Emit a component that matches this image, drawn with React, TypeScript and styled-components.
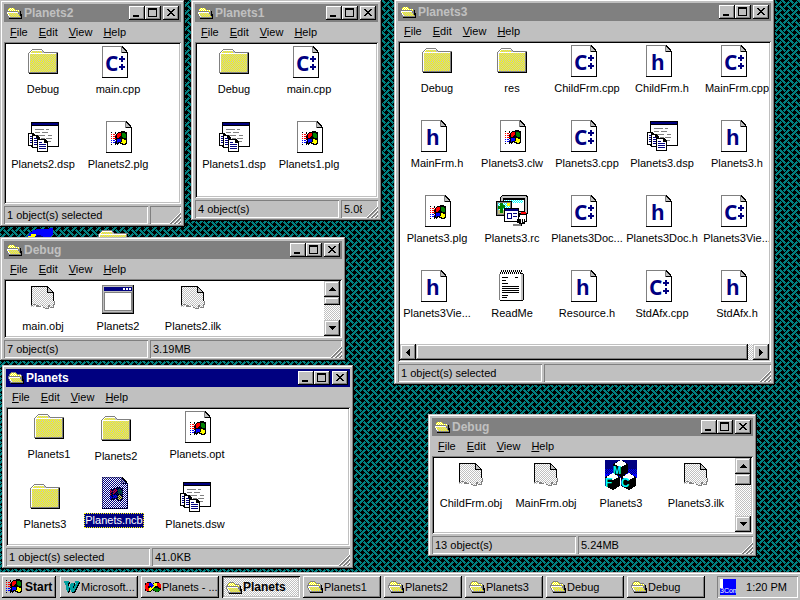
import React from "react";
import styled, { createGlobalStyle, css } from "styled-components";

const face = "#c0c0c0";
const shade = "#808080";
const navy = "#000080";

/* ---------- pixel drawings ---------- */

const palette: Record<string, string> = {
  K: "#000000", W: "#ffffff", S: "#808080", L: "#c0c0c0", R: "#ff0000", G: "#008000",
  B: "#0000ff", Y: "#ffff00",
};
const dithers: Record<string, [string, string]> = {
  y: ["Y", "L"],
};

function tracePixels(rows: string[]) {
  const out: Record<string, string> = {};
  rows.forEach((row, y) => {
    let x = 0;
    const at = (i: number) => {
      const ch = row[i];
      return dithers[ch] ? dithers[ch][(i + y) % 2] : ch;
    };
    while (x < row.length) {
      const ch = at(x);
      let end = x + 1;
      while (end < row.length && at(end) === ch) end++;
      if (palette[ch]) out[ch] = (out[ch] || "") + `M${x} ${y}h${end - x}v1h${x - end}z`;
      x = end;
    }
  });
  return Object.entries(out);
}

const Pixels = ({ rows }: { rows: string[] }) => (
  <>{tracePixels(rows).map(([ch, d]) => <path key={ch} d={d} fill={palette[ch]} />)}</>
);

const flagRows = [
  "..........KKKK..",
  "K...K..KKKKKKKKK",
  "....K.KRRRKGGGKK",
  "R.RR.KRRRRKGGGGK",
  "....RKRRRRKGGGGK",
  "R.RRKKRRRKKGGGGK",
  "....KKRRKKKKGGGK",
  "R.RRRKKKKKKKKKKK",
  "....KKBBBBKYYKKK",
  "B.BB.KBBBBKYYYYK",
  "....BKBBBBKYYYYK",
  "B.BBKKBKKKYYYYYK",
  "....KKKK.KKKYYKK",
  "K...K.K....KKKK.",
];

const openFolderRows = [
  "................",
  "................",
  "...SSSSS........",
  "..SYWYWYS.......",
  ".SYWYWYWYSSSS...",
  ".SWYWYWYWYWYWS..",
  "SSSSSSSSSSSSYSK.",
  "SWWWWWWWWWWWSSK.",
  "SWyyyyyyyyyySSK.",
  ".SWyyyyyyyyyySKK",
  ".SWyyyyyyyyyySKK",
  "..SWyyyyyyyyyySK",
  "..SSSSSSSSSSSSSK",
  "...KKKKKKKKKKKKK",
  "................",
  "................",
];

const folderRows = (() => {
  const rows = ["", "", ""];
  rows.push(".....SSSSSSSSSS");
  rows.push("....SWWWWWWWWWWS");
  rows.push("...SWyyyyyyyyyyLS");
  rows.push("..SWyyyyyyyyyyyyLSSSSSSSSSSSSSS");
  rows.push(".SWWWWWWWWWWWWWWWWWWWWWWWWWWWSK");
  for (let i = 0; i < 18; i++) rows.push(".SW" + "y".repeat(26) + "SK");
  rows.push(".S" + "S".repeat(27) + "SK");
  rows.push("..KKKKKKKKKKKKKKKKKKKKKKKKKKKKK");
  return rows;
})();

type IconKind = "folder" | "cpp" | "h" | "win" | "ncb" | "project" | "rc" | "notes" | "obj" | "exe" | "mfc";

const Page = () => (
  <>
    <path d="M0 0H20L26 7V32H0Z" fill="#fff" />
    <path d="M0 0h20v1H1v30H0z" fill={shade} />
    <path d="M25 7h1v25H0v-1h25z" />
    <path d="M19 0h1v6h5v1h-6z" fill={shade} />
    <path d="M20 0h1v1h1v1h1v1h1v1h1v2h1v2h-1v-1h-5z" />
    <path d="M20 2h1v1h1v1h1v1h1v1h-4z" fill={face} />
  </>
);

const SheetStack = () => (
  <>
    {[[1, 12, 8], [5, 14, 8], [10, 18, 11]].map(([x, y, w]) => (
      <g key={x}>
        <path d={`M${x} ${y}h${w - 3}l3 3v10h-${w}z`} fill="#000" />
        <path d={`M${x + 1} ${y + 1}h${w - 5}v3h3v8h-${w - 2}z`} fill="#fff" />
        <path d={`M${x + 2} ${y + 3}h3v1h-3zM${x + 2} ${y + 5}h${w - 4}v1h-${w - 4}zM${x + 2} ${y + 7}h${w - 4}v1h-${w - 4}zM${x + 2} ${y + 9}h${w - 4}v1h-${w - 4}z`} fill={navy} />
      </g>
    ))}
  </>
);

const drawings: Record<IconKind, React.ReactNode> = {
  folder: <Pixels rows={folderRows} />,
  cpp: (
    <>
      <Page />
      <text x="3" y="25" fill={navy} fontFamily="'Open Sans','Noto Sans',sans-serif" fontWeight="700" fontSize="21">C</text>
      <path d="M19 10h2v2h2v2h-2v2h-2v-2h-2v-2h2zM19 18h2v2h2v2h-2v2h-2v-2h-2v-2h2z" fill={navy} />
    </>
  ),
  h: (
    <>
      <Page />
      <text x="5" y="25" fill={navy} fontFamily="'Liberation Sans',sans-serif" fontWeight="700" fontSize="22">h</text>
    </>
  ),
  win: <g transform="translate(4 0)"><Page /><g transform="translate(5 10)"><Pixels rows={flagRows} /></g></g>,
  ncb: (
    <g transform="translate(4 0)">
      <Page />
      <g transform="translate(5 10)"><Pixels rows={flagRows} /></g>
      <path d="M0 0H20L26 7V32H0Z" fill="url(#selected-veil)" />
    </g>
  ),
  project: (
    <>
      <path d="M4 1h28v25H4z" />
      <path d="M5 5h26v20H5z" fill="#fff" />
      <path d="M5 2h26v2H5z" fill={navy} />
      <path d="M8 8h9v1H8zM19 8h3v1h-3zM8 11h5v1H8zM15 11h6v1h-6zM10 14h8v1h-8zM21 14h4v1h-4zM14 17h4v1h-4zM19 17h6v1h-6zM20 20h4v1h-4z" fill={shade} />
      <SheetStack />
    </>
  ),
  rc: (
    <>
      <path d="M6 0h24l2 2v16l-2 2H6l-2-2V2z" />
      <path d="M6 1h24v1h1v16H5V2h1z" fill={face} />
      <path d="M7 3h22v14H7z" />
      <path d="M8 5h20v11H8z" fill="#fff" />
      <path d="M9 5h18v3H9z" fill="url(#cyan-dither)" />
      <path d="M0 6h16v15H0z" fill="#000" />
      <path d="M1 7h14v13H1z" fill={shade} />
      <path d="M2 8h12v7H2z" fill="url(#cyan-dither)" />
      <path d="M2 15h12v4H2z" fill="#c0c080" />
      <path d="M11 8h3v3h-3z" fill="#ff0" />
      <path d="M4 8h3v10H4zM2 11h2v3H2zM7 10h2v3H7z" fill="#008000" />
      <path d="M8 13h15v14H8z" />
      <path d="M9 16h13v10H9z" fill="#fff" />
      <path d="M9 14h13v2H9z" fill={navy} />
      <path d="M11 18h5v6h-5z" fill={navy} />
      <path d="M12 19h3v4h-3z" fill="#fff" />
      <path d="M17 18h4v1h-4zM17 21h4v1h-4z" fill={navy} />
      <path d="M25 17h5v2h-5z" fill="#f00" />
      <path d="M23 19h8v8h-2v2h-3v2h-3v-3h-2v-4h2z" fill="#000" />
      <path d="M24 20h6v6h-1v-2h-1v3h-1v-3h-1v4h-1v-4h-2v-2h1z" fill="#fff" />
      <path d="M17 29h8v2h-8z" fill={shade} />
    </>
  ),
  notes: (
    <>
      <path d="M4 3h23v1h1v26h-1v1H4v-1H3V4h1z" />
      <path d="M4 3h21v27H4z" fill="#fff" />
      <path d="M3 4h1v26H3z" fill={shade} />
      <path d="M25 4h2v26h-2z" fill={face} />
      <path d="M4 30h23v1H4z" />
      {Array.from({ length: 11 }, (_, i) => (
        <path key={i} d={`M${4 + i * 2} 2h1v2h-1zM${5 + i * 2} 0h1v2h-1z`} />
      ))}
      <path d="M6 7h6v1H6zM19 7h3v1h-3zM6 10h4v1H6zM6 13h6v1H6zM6 16h17v1H6zM6 18h17v1H6zM6 20h17v1H6zM6 22h17v1H6zM6 25h6v1H6zM6 27h5v1H6z" />
    </>
  ),
  obj: (
    <>
      <path d="M4 3h17l6 6v12l-3 3h-3l-1 1h-4l-2-2H9l-3 1H4z" fill="url(#gray-dither)" />
      <path d="M4 22V3h17l6 7v8h-1v-8h-6V4H5v18z" />
      <path d="M21 5l4 4h-4z" fill={face} />
      <path d="M4 22h2v-1h3v1h3v1h3v-1h1v2h2v1h3v-3h2v2h3v-3h1v-3h1v4h-1v3h-4v-1h-1v2h-4v-1h-2v-2h-2v1H9v-2H6v1H4z" fill={shade} />
    </>
  ),
  exe: (
    <>
      <path d="M0 2h32v29H0z" />
      <path d="M0 2h31v28H0z" fill={shade} />
      <path d="M1 3h29v26H1z" fill={face} />
      <path d="M2 4h28v4H2z" fill={navy} />
      <path d="M21 5h2v2h-2zM24 5h2v2h-2zM27 5h2v2h-2z" fill="#fff" />
      <path d="M2 9h28v19H2z" fill={shade} />
      <path d="M3 10h26v17H3z" fill="#fff" />
    </>
  ),
  mfc: (
    <>
      <path d="M0 0h32v18H0z" fill="#0000ff" />
      <path d="M0 0h32v9H0z" fill={navy} />
      <path d="M0 9h32v5H0z" fill="url(#selected-veil)" />
      {[[8, 0], [0, 13], [16, 13]].map(([x, y]) => (
        <g key={x} transform={`translate(${x} ${y})`}>
          <path d="M0 4L8 0L15 4V13L8 17L0 13Z" />
          <path d="M1 4L8 0L14 4L8 7Z" fill="#fff" />
        </g>
      ))}
      <g fill="#0ff" fontFamily="'Liberation Sans',sans-serif" fontWeight="700">
        <text x="8" y="14" fontSize="10">M</text>
        <text x="0" y="27" fontSize="12">F</text>
        <text x="16" y="27" fontSize="12">C</text>
      </g>
    </>
  ),
};

const FileIcon = ({ kind }: { kind: IconKind }) => (
  <svg width="32" height="32" viewBox="0 0 32 32" shapeRendering="crispEdges" overflow="visible" aria-hidden="true">
    {drawings[kind]}
  </svg>
);

const SmallIcon = ({ children }: { children: React.ReactNode }) => (
  <svg width="16" height="16" viewBox="0 0 16 16" shapeRendering="crispEdges" aria-hidden="true">{children}</svg>
);

const FolderGlyph = () => <SmallIcon><Pixels rows={openFolderRows} /></SmallIcon>;

const SharedPatterns = () => (
  <PatternDefs width="0" height="0" aria-hidden="true">
    <defs>
      {[["gray-dither", "#fff", face], ["cyan-dither", "#0ff", "#fff"], ["selected-veil", navy, "none"]].map(([id, a, b]) => (
        <pattern key={id} id={id} width="2" height="2" patternUnits="userSpaceOnUse">
          <path d="M0 0h1v1H0zM1 1h1v1H1z" fill={a} shapeRendering="crispEdges" />
          <path d="M1 0h1v1H1zM0 1h1v1H0z" fill={b} shapeRendering="crispEdges" />
        </pattern>
      ))}
    </defs>
  </PatternDefs>
);

/* ---------- desktop ---------- */

const thatch = [248, 116, 34, 71, 143, 23, 34, 113];
const thatchPath = thatch
  .map((bits, y) => Array.from({ length: 8 }, (_, x) => ((bits >> (7 - x)) & 1 ? `M${x} ${y}h1v1h-1z` : "")).join(""))
  .join("");
const thatchTile = `url("data:image/svg+xml,${encodeURIComponent(
  `<svg xmlns="http://www.w3.org/2000/svg" width="8" height="8" shape-rendering="crispEdges"><path d="${thatchPath}"/></svg>`
)}")`;

const checker = `repeating-conic-gradient(${face} 0 25%, #fff 0 50%) 0 0 / 2px 2px`;

const Global = createGlobalStyle`
  *, *::before, *::after { box-sizing: border-box; }
  body { margin: 0; overflow: hidden; }
  body, button { font: 11px/15px "Liberation Sans", Arial, sans-serif; color: #000; }
  button { border: 0; padding: 0; margin: 0; background: none; }
  svg { display: block; flex: none; }
`;

const PatternDefs = styled.svg`position: absolute;`;

const Screen = styled.div`
  display: flex;
  flex-direction: column;
  height: 100vh;
`;

const Desktop = styled.main`
  position: relative;
  flex: 1;
  overflow: hidden;
  background: #008080 ${thatchTile} 0 0 / 8px 8px;
`;

const Shortcut = styled.div<{ $x: number; $y: number }>`
  position: absolute;
  left: ${(p) => p.$x}px;
  top: ${(p) => p.$y}px;
`;

const raised = css`
  background: ${face};
  box-shadow: inset -1px -1px #000, inset 1px 1px #fff, inset -2px -2px ${shade};
`;

const raisedSoft = css`
  background: ${face};
  box-shadow: inset -1px -1px #000, inset 1px 1px ${face}, inset -2px -2px ${shade}, inset 2px 2px #fff;
`;

/* ---------- window parts ---------- */

const Frame = styled.section<{ $x: number; $y: number; $w: number; $h: number }>`
  ${raisedSoft}
  position: absolute;
  left: ${(p) => p.$x}px;
  top: ${(p) => p.$y}px;
  width: ${(p) => p.$w}px;
  height: ${(p) => p.$h}px;
  display: flex;
  flex-direction: column;
  padding: 4px 4px 3px;
`;

const TitleBar = styled.header<{ $active?: boolean }>`
  display: flex;
  align-items: center;
  height: 18px;
  padding: 0 2px;
  flex: none;
  background: ${(p) => (p.$active ? navy : shade)};
  color: ${(p) => (p.$active ? "#fff" : face)};
`;

const Title = styled.h2`
  flex: 1;
  margin: 0 0 0 2px;
  font-size: 12px;
  line-height: 18px;
  font-weight: 700;
`;

const CaptionButton = styled.button<{ $apart?: boolean }>`
  ${raised}
  width: 16px;
  height: 14px;
  margin-left: ${(p) => (p.$apart ? 2 : 0)}px;
`;

const MenuBar = styled.nav`
  display: flex;
  height: 20px;
  padding-left: 1px;
  flex: none;
`;

const MenuItem = styled.button`
  padding: 0 6px 0 5px;
  line-height: 20px;
`;

const Client = styled.div<{ $column?: boolean }>`
  flex: 1;
  min-height: 0;
  display: flex;
  flex-direction: ${(p) => (p.$column ? "column" : "row")};
  padding: 2px;
  background: #fff;
  box-shadow: inset 1px 1px ${shade}, inset -1px -1px #fff, inset 2px 2px #000, inset -2px -2px ${face};
`;

const IconGrid = styled.div<{ $columns: number }>`
  flex: 1;
  min-width: 0;
  min-height: 0;
  overflow: hidden;
  display: grid;
  grid-template-columns: repeat(${(p) => p.$columns}, 75px);
  grid-auto-rows: 75px;
  align-content: start;
  padding-top: 2px;
`;

const IconCanvas = styled.div`
  position: relative;
  flex: 1;
`;

const Item = styled.button`
  width: 74px;
  display: flex;
  flex-direction: column;
  align-items: center;
  align-self: start;
  gap: 4px;
`;

const PlacedItem = styled(Item)<{ $x: number; $y: number }>`
  position: absolute;
  left: ${(p) => p.$x}px;
  top: ${(p) => p.$y}px;
`;

const ItemLabel = styled.span<{ $selected?: boolean }>`
  height: 15px;
  white-space: nowrap;
  ${(p) => p.$selected && css`
    padding: 0 1px;
    background: ${navy};
    color: #fff;
    outline: 1px dotted #ffff00;
    outline-offset: -1px;
  `}
`;

const StatusBar = styled.footer`
  position: relative;
  display: flex;
  gap: 2px;
  height: 18px;
  margin-top: 2px;
  flex: none;
`;

const StatusCell = styled.div<{ $fill?: boolean }>`
  flex: ${(p) => (p.$fill ? "1 1 0" : "0 0 144px")};
  min-width: 0;
  padding: 0 ${(p) => (p.$fill ? 16 : 3)}px 0 3px;
  line-height: 18px;
  box-shadow: inset 1px 1px ${shade}, inset -1px -1px #fff;
`;

const StatusText = styled.span`
  display: block;
  overflow: hidden;
  white-space: nowrap;
`;

const Grip = styled.svg`
  position: absolute;
  right: 0;
  bottom: 0;
`;

const ScrollTrack = styled.div<{ $across?: boolean }>`
  display: flex;
  flex-direction: ${(p) => (p.$across ? "row" : "column")};
  flex: 0 0 16px;
  background: ${checker};
`;

const ScrollButton = styled.button`
  ${raisedSoft}
  display: grid;
  place-items: center;
  width: 16px;
  height: 16px;
  flex: none;
`;

const Thumb = styled.div<{ $size?: number }>`
  ${raisedSoft}
  flex: ${(p) => (p.$size ? `0 0 ${p.$size}px` : "1")};
`;

const TrackSpace = styled.div<{ $size?: number }>`
  flex: ${(p) => (p.$size ? `0 0 ${p.$size}px` : "1")};
`;

const arrows = {
  up: "M3 0h1v1h1v1h1v1h1v1H0V3h1V2h1V1h1z",
  down: "M0 0h7v1H6v1H5v1H4v1H3V3H2V2H1V1H0z",
  left: "M3 0h1v7H3V6H2V5H1V4H0V3h1V2h1V1h1z",
  right: "M0 0h1v1h1v1h1v1h1v1H3v1H2v1H1v1H0z",
};

const Arrow = ({ to }: { to: keyof typeof arrows }) => {
  const wide = to === "up" || to === "down";
  return (
    <ScrollButton aria-label={`Scroll ${to}`}>
      <svg width={wide ? 7 : 4} height={wide ? 4 : 7} shapeRendering="crispEdges" aria-hidden="true"><path d={arrows[to]} /></svg>
    </ScrollButton>
  );
};

const captionShapes = {
  Minimize: "M4 9h6v2H4z",
  Maximize: "M3 2h9v9H3zM4 4v6h7V4z",
  Close: "M4 3h2v1h1v1h2V4h1V3h2v1h-1v1h-1v1H9v1h1v1h1v1h1v1h-2V9H9V8H7v1H6v1H4V9h1V8h1V7h1V6H6V5H5V4H4z",
};

type Entry = { name: string; kind: IconKind; x?: number; y?: number; selected?: boolean };
type Win = {
  title: string; x: number; y: number; w: number; h: number; active?: boolean; columns?: number;
  files: Entry[]; status: string; size?: string; vthumb?: number; hscroll?: boolean;
};

const ExplorerWindow = ({ win }: { win: Win }) => (
  <Frame $x={win.x} $y={win.y} $w={win.w} $h={win.h} aria-label={win.title}>
    <TitleBar $active={win.active}>
      <FolderGlyph />
      <Title>{win.title}</Title>
      {Object.entries(captionShapes).map(([name, d]) => (
        <CaptionButton key={name} aria-label={name} $apart={name === "Close"}>
          <svg width="16" height="14" shapeRendering="crispEdges" aria-hidden="true"><path d={d} fillRule="evenodd" /></svg>
        </CaptionButton>
      ))}
    </TitleBar>
    <MenuBar>
      {["File", "Edit", "View", "Help"].map((m) => (
        <MenuItem key={m}><u>{m[0]}</u>{m.slice(1)}</MenuItem>
      ))}
    </MenuBar>
    <Client $column={win.hscroll}>
      {win.columns ? (
        <IconGrid $columns={win.columns}>
          {win.files.map((f, i) => (
            <Item key={i}>
              <FileIcon kind={f.kind} />
              <ItemLabel>{f.name}</ItemLabel>
            </Item>
          ))}
        </IconGrid>
      ) : (
        <IconCanvas>
          {win.files.map((f, i) => (
            <PlacedItem key={i} $x={f.x ?? 0} $y={f.y ?? 0}>
              <FileIcon kind={f.kind} />
              <ItemLabel $selected={f.selected}>{f.name}</ItemLabel>
            </PlacedItem>
          ))}
        </IconCanvas>
      )}
      {win.vthumb && (
        <ScrollTrack>
          <Arrow to="up" />
          <Thumb $size={win.vthumb} />
          <TrackSpace />
          <Arrow to="down" />
        </ScrollTrack>
      )}
      {win.hscroll && (
        <ScrollTrack $across>
          <Arrow to="left" />
          <Thumb />
          <TrackSpace $size={5} />
          <Arrow to="right" />
        </ScrollTrack>
      )}
    </Client>
    <StatusBar>
      <StatusCell><StatusText>{win.status}</StatusText></StatusCell>
      <StatusCell $fill><StatusText>{win.size}</StatusText></StatusCell>
      <Grip width="12" height="12" aria-hidden="true">
        <path d="M0 12L12 0M4 12L12 4M8 12L12 8" stroke="#fff" />
        <path d="M1 12L12 1M2 12L12 2M5 12L12 5M6 12L12 6M9 12L12 9M10 12L12 10" stroke={shade} />
      </Grip>
    </StatusBar>
  </Frame>
);

const windows: Win[] = [
  {
    title: "Planets2", x: 0, y: 0, w: 185, h: 227, columns: 2, status: "1 object(s) selected",
    files: [
      { name: "Debug", kind: "folder" }, { name: "main.cpp", kind: "cpp" },
      { name: "Planets2.dsp", kind: "project" }, { name: "Planets2.plg", kind: "win" },
    ],
  },
  {
    title: "Planets1", x: 191, y: 0, w: 191, h: 221, columns: 2, status: "4 object(s)", size: "5.08KB",
    files: [
      { name: "Debug", kind: "folder" }, { name: "main.cpp", kind: "cpp" },
      { name: "Planets1.dsp", kind: "project" }, { name: "Planets1.plg", kind: "win" },
    ],
  },
  {
    title: "Planets3", x: 394, y: -1, w: 381, h: 386, columns: 5, status: "1 object(s) selected", hscroll: true,
    files: [
      { name: "Debug", kind: "folder" }, { name: "res", kind: "folder" }, { name: "ChildFrm.cpp", kind: "cpp" },
      { name: "ChildFrm.h", kind: "h" }, { name: "MainFrm.cpp", kind: "cpp" },
      { name: "MainFrm.h", kind: "h" }, { name: "Planets3.clw", kind: "win" }, { name: "Planets3.cpp", kind: "cpp" },
      { name: "Planets3.dsp", kind: "project" }, { name: "Planets3.h", kind: "h" },
      { name: "Planets3.plg", kind: "win" }, { name: "Planets3.rc", kind: "rc" }, { name: "Planets3Doc...", kind: "cpp" },
      { name: "Planets3Doc.h", kind: "h" }, { name: "Planets3Vie...", kind: "cpp" },
      { name: "Planets3Vie...", kind: "h" }, { name: "ReadMe", kind: "notes" }, { name: "Resource.h", kind: "h" },
      { name: "StdAfx.cpp", kind: "cpp" }, { name: "StdAfx.h", kind: "h" },
    ],
  },
  {
    title: "Debug", x: 0, y: 237, w: 346, h: 124, columns: 3, status: "7 object(s)", size: "3.19MB", vthumb: 8,
    files: [
      { name: "main.obj", kind: "obj" }, { name: "Planets2", kind: "exe" }, { name: "Planets2.ilk", kind: "obj" },
    ],
  },
  {
    title: "Debug", x: 428, y: 414, w: 329, h: 143, columns: 4, status: "13 object(s)", size: "5.24MB", vthumb: 11,
    files: [
      { name: "ChildFrm.obj", kind: "obj" }, { name: "MainFrm.obj", kind: "obj" },
      { name: "Planets3", kind: "mfc" }, { name: "Planets3.ilk", kind: "obj" },
    ],
  },
  {
    title: "Planets", x: 2, y: 365, w: 352, h: 204, active: true, status: "1 object(s) selected", size: "41.0KB",
    files: [
      { name: "Planets1", kind: "folder", x: 4, y: 2 }, { name: "Planets2", kind: "folder", x: 71, y: 4 },
      { name: "Planets.opt", kind: "win", x: 152, y: 2 }, { name: "Planets3", kind: "folder", x: 0, y: 72 },
      { name: "Planets.ncb", kind: "ncb", x: 69, y: 68, selected: true }, { name: "Planets.dsw", kind: "project", x: 150, y: 72 },
    ],
  },
];

/* ---------- taskbar ---------- */

const Taskbar = styled.footer`
  display: flex;
  flex: 0 0 28px;
  padding: 4px 2px 2px;
  background: ${face};
  box-shadow: inset 0 1px ${face}, inset 0 2px #fff;
`;

const StartButton = styled.button`
  ${raised}
  display: flex;
  align-items: center;
  width: 54px;
  padding: 0 0 0 4px;
  gap: 3px;
  font-size: 12px;
  font-weight: 700;
`;

const TaskList = styled.div`
  flex: 1;
  min-width: 0;
  display: flex;
  gap: 3px;
  margin: 0 12px 0 4px;
`;

const TaskButton = styled.button<{ $pressed?: boolean }>`
  ${raised}
  flex: 1 1 0;
  min-width: 0;
  display: flex;
  align-items: center;
  gap: 1px;
  padding-left: 4px;
  white-space: nowrap;
  ${(p) => p.$pressed && css`
    padding-top: 1px;
    font-size: 12px;
    font-weight: 700;
    background: ${checker};
    box-shadow: inset 1px 1px #000, inset -1px -1px #fff, inset 2px 2px ${shade}, inset -2px -2px ${face};
  `}
`;

const Tray = styled.div`
  flex: 0 0 81px;
  display: flex;
  align-items: center;
  justify-content: space-between;
  padding: 0 11px 0 3px;
  box-shadow: inset 1px 1px ${shade}, inset -1px -1px #fff;
`;

const tasks: { label: string; kind: "word" | "studio" | "folder"; pressed?: boolean }[] = [
  { label: "Microsoft...", kind: "word" },
  { label: "Planets - ...", kind: "studio" },
  { label: "Planets", kind: "folder", pressed: true },
  { label: "Planets1", kind: "folder" },
  { label: "Planets2", kind: "folder" },
  { label: "Planets3", kind: "folder" },
  { label: "Debug", kind: "folder" },
  { label: "Debug", kind: "folder" },
];

const TaskGlyph = ({ kind }: { kind: "word" | "studio" | "folder" }) => {
  if (kind === "folder") return <FolderGlyph />;
  if (kind === "word")
    return (
      <SmallIcon>
        <path d="M1 3h5v2H5l1 5 2-6h3l-1 6 3-6h-1V3h4v1l-5 10H8l-1-5-2 5H4L2 5H1z" fill="#000" />
        <path d="M0 2h5v2H4l1 6 2-6h3l-1 6 3-6h-1V2h4v1l-5 10H7l-1-5-2 5H3L1 4H0z" fill="#00a0a0" />
      </SmallIcon>
    );
  return (
    <SmallIcon>
      <g fill="none" strokeWidth="5" stroke="#000">
        <ellipse cx="4" cy="8" rx="2" ry="3" />
        <ellipse cx="12" cy="8" rx="2" ry="3" />
      </g>
      <g fill="none" strokeWidth="3">
        <path d="M4 5C1 5 1 11 4 11" stroke="#ff0000" />
        <path d="M4 11C7 11 8 5 12 5" stroke="#ffff00" />
        <path d="M4 5C6 5 7 7 8 8" stroke="#0000ff" />
        <path d="M12 5C15 5 15 8 14 9" stroke="#ff0000" />
        <path d="M9 9C10 11 13 12 14 10" stroke="#008000" />
      </g>
    </SmallIcon>
  );
};

export default function App() {
  return (
    <Screen>
      <Global />
      <SharedPatterns />
      <Desktop>
        <Shortcut $x={25} $y={228}>
          <svg width="32" height="32" viewBox="0 0 32 32" shapeRendering="crispEdges" aria-hidden="true">
            <path d="M2 9C4 4 9 1 15 1h8l1-1h4v6l-2 2v3H2z" fill="#0000ff" />
            <path d="M3 8h3v-2h5v2l-2 2H2z" fill="#ffff00" />
            <path d="M9 10c1-4 9-4 11 0z" fill={navy} />
          </svg>
        </Shortcut>
        <Shortcut $x={97} $y={227}><FileIcon kind="folder" /></Shortcut>
        {windows.map((w) => <ExplorerWindow key={`${w.x}-${w.y}`} win={w} />)}
      </Desktop>
      <Taskbar>
        <StartButton><SmallIcon><Pixels rows={flagRows} /></SmallIcon>Start</StartButton>
        <TaskList>
          {tasks.map((t, i) => (
            <TaskButton key={i} $pressed={t.pressed}><TaskGlyph kind={t.kind} />{t.label}</TaskButton>
          ))}
        </TaskList>
        <Tray>
          <SmallIcon>
            <path d="M0 0h16v16H0z" fill="#fff" />
            <path d="M3 0h13v16H0V9h3z" fill="#0000ff" />
            <text x="0" y="14" fontFamily="'Liberation Sans',sans-serif" fontSize="7" fill="#fff">3Com</text>
          </SmallIcon>
          <time>1:20 PM</time>
        </Tray>
      </Taskbar>
    </Screen>
  );
}
